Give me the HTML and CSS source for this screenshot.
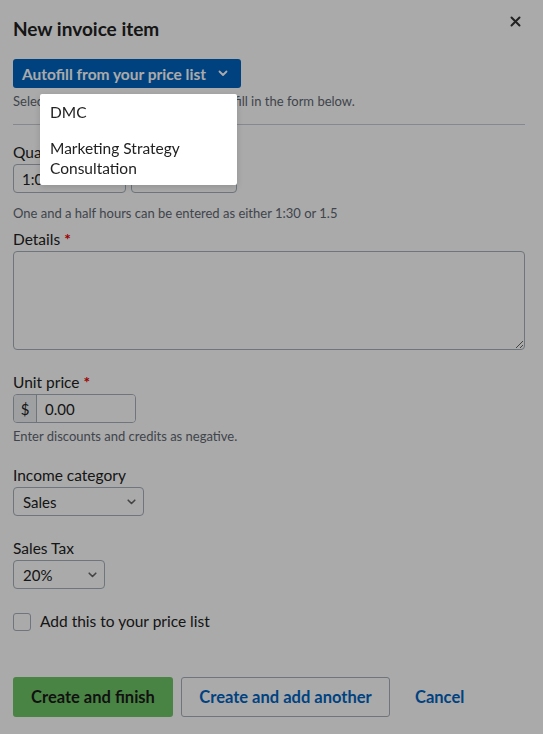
FILE: index.html
```html
<!DOCTYPE html>
<html lang="en">
<head>
    <meta charset="UTF-8">
    <meta name="viewport" content="width=device-width, initial-scale=1.0">
    <title>New invoice item</title>
    <link rel="stylesheet" href="styles.css">
</head>
<body>
    <div class="modal">
        <div class="modal-header">
            <h1>New invoice item</h1>
            <svg class="close" width="11" height="11" viewBox="0 0 11 11"><path d="M1.5 1.5 L9.5 9.5 M9.5 1.5 L1.5 9.5" stroke="currentColor" stroke-width="2" stroke-linecap="round"/></svg>
        </div>

        <div class="autofill">
            <button class="btn-autofill" type="button">
                Autofill from your price list
                <svg width="10" height="7" viewBox="0 0 10 7"><path d="M1.5 1.5 L5 5 L8.5 1.5" fill="none" stroke="currentColor" stroke-width="1.8" stroke-linecap="round" stroke-linejoin="round"/></svg>
            </button>
            <p class="hint">Select a product from your price list to fill in the form below.</p>
        </div>

        <hr>

        <form class="item-form">
            <div class="form-group group-qty">
                <label>Quantity</label>
                <div class="qty-row">
                    <input type="text" class="qty" value="1:00">
                    <input type="text" class="unit" value="">
                </div>
                <p class="hint hint-gap">One and a half hours can be entered as either 1:30 or 1.5</p>
            </div>

            <div class="form-group group-details">
                <label>Details <span class="req">*</span></label>
                <textarea class="details"></textarea>
            </div>

            <div class="form-group group-price">
                <label>Unit price <span class="req">*</span></label>
                <div class="input-group">
                    <span class="addon">$</span>
                    <input type="text" value="0.00">
                </div>
                <p class="hint">Enter discounts and credits as negative.</p>
            </div>

            <div class="form-group group-category">
                <label>Income category</label>
                <div class="select select-wide">
                    <span>Sales</span>
                    <svg width="9" height="6" viewBox="0 0 9 6"><path d="M1.2 1.2 L4.5 4.5 L7.8 1.2" fill="none" stroke="currentColor" stroke-width="1.6" stroke-linecap="round" stroke-linejoin="round"/></svg>
                </div>
            </div>

            <div class="form-group">
                <label>Sales Tax</label>
                <div class="select select-narrow">
                    <span>20%</span>
                    <svg width="9" height="6" viewBox="0 0 9 6"><path d="M1.2 1.2 L4.5 4.5 L7.8 1.2" fill="none" stroke="currentColor" stroke-width="1.6" stroke-linecap="round" stroke-linejoin="round"/></svg>
                </div>
            </div>

            <label class="check">
                <span class="box"></span>
                Add this to your price list
            </label>

            <div class="actions">
                <button type="button" class="btn-primary">Create and finish</button>
                <button type="button" class="btn-secondary">Create and add another</button>
                <a href="#" class="cancel">Cancel</a>
            </div>
        </form>
    </div>

    <!-- dim layer behind the open menu -->
    <div class="overlay"></div>

    <ul class="menu">
        <li>DMC</li>
        <li>Marketing Strategy Consultation</li>
    </ul>
</body>
</html>
```

FILE: styles.css
```css
body {
    margin: 0;
    font-family: Lato, "Open Sans", sans-serif;
    color: #222;
    background-color: white;
}
.modal {
    padding: 16px 18px 0 13px;
}
.modal-header {
    display: flex;
    justify-content: space-between;
    align-items: flex-start;
}
h1 {
    margin: 0;
    font-size: 19px;
    font-weight: bold;
    line-height: 26px;
}
.close {
    color: #333;
    margin-right: 4px;
}
.autofill {
    margin-top: 17px;
}
.btn-autofill {
    display: inline-flex;
    align-items: center;
    gap: 12px;
    height: 29px;
    padding: 0 13px 0 9px;
    border: none;
    border-radius: 3px;
    background-color: #0064bf;
    color: white;
    font-family: inherit;
    font-size: 15.5px;
    font-weight: bold;
}
.hint {
    margin: 5px 0 0;
    font-size: 13px;
    color: #5f6873;
    line-height: 16px;
}
.hint-gap {
    margin-top: 12px;
}
hr {
    border: none;
    border-top: 1px solid #c8cdd2;
    margin: 15px 0 0;
}
.item-form {
    padding-top: 18px;
}
.form-group {
    margin-bottom: 17px;
}
label {
    display: block;
    font-size: 15.5px;
    line-height: 19px;
    margin-bottom: 2px;
}
.req {
    color: #e00;
    font-weight: bold;
}
input[type="text"], textarea {
    box-sizing: border-box;
    height: 29px;
    border: 1px solid #a5b0ba;
    border-radius: 4px;
    padding: 0 8px;
    font-family: inherit;
    font-size: 15px;
    color: #222;
    background: white;
}
.qty-row {
    display: flex;
    gap: 5px;
}
.qty {
    width: 113px;
}
.unit {
    width: 106px;
}
.group-qty {
    margin-bottom: 9px;
}
.details {
    display: block;
    width: 100%;
    height: 99px;
    resize: vertical;
}
.group-details {
    margin-bottom: 23px;
}
.input-group {
    display: flex;
    width: 123px;
    height: 29px;
    box-sizing: border-box;
    border: 1px solid #a5b0ba;
    border-radius: 4px;
    overflow: hidden;
}
.addon {
    width: 24px;
    display: flex;
    align-items: center;
    justify-content: center;
    background-color: #eef1f4;
    border-right: 1px solid #a5b0ba;
    font-size: 15px;
}
.input-group input[type="text"] {
    border: none;
    border-radius: 0;
    height: 27px;
    width: 98px;
}
.group-price {
    margin-bottom: 22px;
}
.select {
    display: flex;
    align-items: center;
    justify-content: space-between;
    box-sizing: border-box;
    height: 29px;
    padding: 0 7px 0 9px;
    border: 1px solid #a5b0ba;
    border-radius: 4px;
    font-size: 15px;
    color: #222;
}
.select svg {
    color: #666;
}
.select-wide {
    width: 131px;
}
.select-narrow {
    width: 92px;
}
.group-category {
    margin-bottom: 23px;
}
.check {
    display: flex;
    align-items: center;
    gap: 9px;
    margin-top: 23px;
}
.box {
    width: 16px;
    height: 16px;
    border: 1px solid #a5b0ba;
    border-radius: 3px;
    background: white;
}
.actions {
    display: flex;
    align-items: center;
    gap: 8px;
    margin-top: 46px;
}
.actions button {
    height: 40px;
    border-radius: 3px;
    font-family: inherit;
    font-size: 16.5px;
    font-weight: bold;
    padding: 0;
}
.btn-primary {
    width: 160px;
    border: none;
    background-color: #6fc766;
    color: #1a1a1a;
}
.btn-secondary {
    width: 209px;
    border: 1px solid #a5b0ba;
    background: white;
    color: #0064bf;
}
.cancel {
    margin-left: 17px;
    color: #0064bf;
    font-size: 16.5px;
    font-weight: bold;
    text-decoration: none;
}
.overlay {
    position: fixed;
    top: 0;
    left: 0;
    right: 0;
    bottom: 0;
    background-color: rgba(0, 0, 0, 0.333);
}
.menu {
    position: absolute;
    top: 94px;
    left: 40px;
    width: 197px;
    margin: 0;
    padding: 2px 0 1px;
    list-style: none;
    background: white;
    border-radius: 2px;
    box-shadow: 0 2px 6px rgba(0, 0, 0, 0.15);
}
.menu li {
    padding: 6px 10px;
    font-size: 15.5px;
    line-height: 20px;
    color: #222;
}
.menu li + li {
    margin-top: 4px;
}
```
